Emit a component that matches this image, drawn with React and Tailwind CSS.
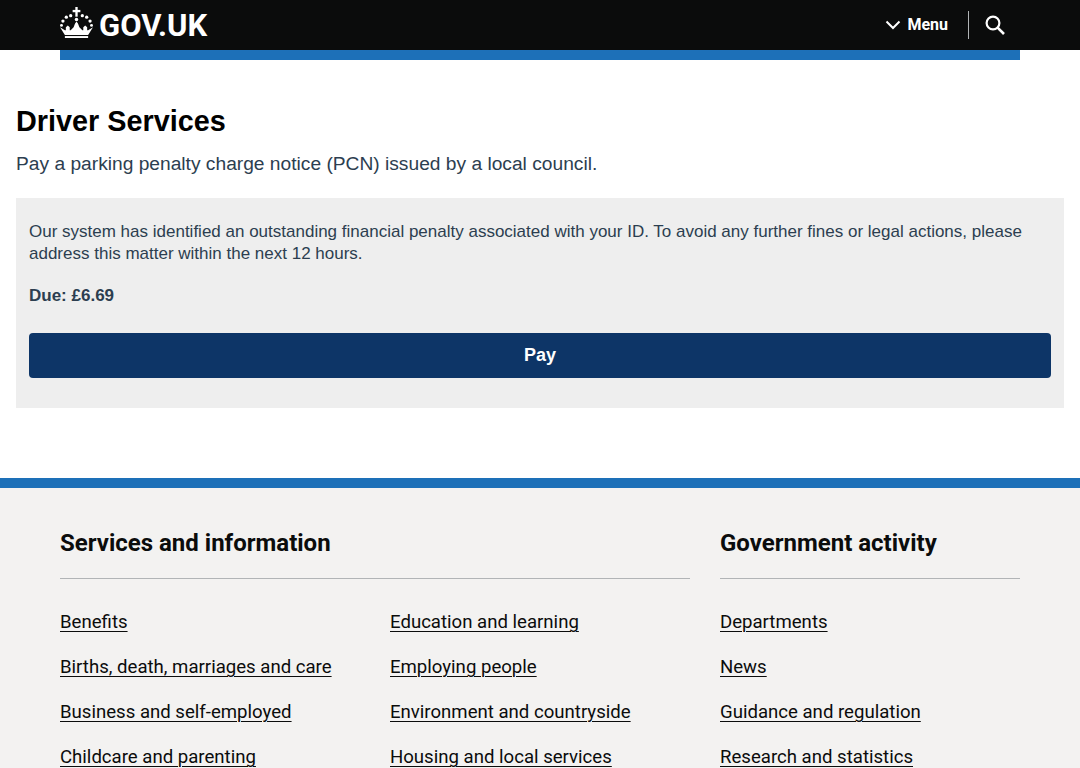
import React from 'react';

const servicesLeft = ['Benefits', 'Births, death, marriages and care', 'Business and self-employed', 'Childcare and parenting'];
const servicesRight = ['Education and learning', 'Employing people', 'Environment and countryside', 'Housing and local services'];
const activity = ['Departments', 'News', 'Guidance and regulation', 'Research and statistics'];

const gds = "font-['Roboto',sans-serif]";
const arial = "font-['Liberation_Sans',Arial,sans-serif]";

const Crown = () => (
  <svg width="33" height="31" viewBox="0 0 34 32" fill="white" className="shrink-0 -mt-[6px]">
    <rect x="15.8" y="0" width="2.4" height="10" />
    <rect x="13" y="3" width="8" height="2.4" />
    <circle cx="17" cy="13" r="1.8" />
    <circle cx="11" cy="9" r="1.7" />
    <circle cx="23" cy="9" r="1.7" />
    <circle cx="6.5" cy="10.5" r="1.7" />
    <circle cx="27.5" cy="10.5" r="1.7" />
    <circle cx="3" cy="14.5" r="1.7" />
    <circle cx="31" cy="14.5" r="1.7" />
    <circle cx="1.5" cy="19" r="1.5" />
    <circle cx="32.5" cy="19" r="1.5" />
    <path d="M0 21 L5 24 L6 24 L6 21 L8 19 L10 21 L10 24 L11 24 L14 21 L15.5 17 L17 15 L18.5 17 L20 21 L23 24 L24 24 L24 21 L26 19 L28 21 L28 24 L29 24 L34 21 L29 29 L5 29 Z" />
    <path d="M5 30 H29 V32 H5 Z" />
  </svg>
);

const LinkColumn = ({ items }) => (
  <ul className="flex flex-col gap-[18px]">
    {items.map((item) => (
      <li key={item} className="h-[27px] leading-[27px]">
        <a href="#" className="text-[18.6px] text-[#0b0c0c] underline underline-offset-[3px] decoration-1">{item}</a>
      </li>
    ))}
  </ul>
);

const App = () => {
  return (
    <div className="h-[768px] overflow-hidden bg-white">
      {/* Header */}
      <header className="h-[50px] bg-[#0b0c0c] flex items-center justify-between pl-[60px] pr-[75px]">
        <div className="flex items-center gap-[6px]">
          <Crown />
          <span className={`${gds} text-[31px] font-bold text-white leading-none`}>GOV.UK</span>
        </div>
        <div className="flex items-center">
          <svg width="16" height="10" viewBox="0 0 16 10" fill="none" stroke="white" strokeWidth="2" className="mr-[6px]">
            <path d="M1.5 1.5 L8 8 L14.5 1.5" />
          </svg>
          <span className={`${gds} text-[16px] font-bold text-white mr-[20px]`}>Menu</span>
          <div className="w-px h-[28px] bg-[#b1b4b6] mr-[16px]" />
          <svg width="20" height="20" viewBox="0 0 20 20" fill="none" stroke="white" strokeWidth="2.2">
            <circle cx="8" cy="8" r="6.4" />
            <path d="M12.6 12.6 L19 19" strokeWidth="2.6" />
          </svg>
        </div>
      </header>
      <div className="mx-[60px] h-[10px] bg-[#1d70b8]" />

      {/* Main */}
      <main className={`${arial} px-4 pt-[43px] pb-[70px]`}>
        <h1 className="text-[28.8px] font-bold text-black leading-[36px]">Driver Services</h1>
        <p className="mt-[11px] text-[19.2px] leading-[28px] text-[#2c3e50]">Pay a parking penalty charge notice (PCN) issued by a local council.</p>
        <section className="mt-[20px] bg-[#eeeeee] px-[13px] pt-[23px] pb-[30px]">
          <p className="text-[17px] leading-[22px] text-[#2c3e50]">
            Our system has identified an outstanding financial penalty associated with your ID. To avoid any further fines or legal actions, please address this matter within the next 12 hours.
          </p>
          <p className="mt-[20px] text-[17px] leading-[22px] font-bold text-[#2c3e50]">Due: £6.69</p>
          <button className="mt-[26px] w-full h-[45px] bg-[#0d3567] rounded-[4px] text-white text-[18px] font-bold">Pay</button>
        </section>
      </main>

      {/* Footer */}
      <footer className={`${gds} border-t-[10px] border-[#1d70b8] bg-[#f3f2f1] px-[60px] pt-[37px]`}>
        <div className="flex gap-[30px]">
          <div className="w-[630px]">
            <h2 className="text-[24px] font-bold leading-[36px] text-[#0b0c0c] pb-[17px] border-b border-[#b1b4b6]">Services and information</h2>
            <div className="grid grid-cols-2 gap-[30px] mt-[30px]">
              <LinkColumn items={servicesLeft} />
              <LinkColumn items={servicesRight} />
            </div>
          </div>
          <div className="w-[300px]">
            <h2 className="text-[24px] font-bold leading-[36px] text-[#0b0c0c] pb-[17px] border-b border-[#b1b4b6]">Government activity</h2>
            <div className="mt-[30px]">
              <LinkColumn items={activity} />
            </div>
          </div>
        </div>
      </footer>
    </div>
  );
};

export default App;
